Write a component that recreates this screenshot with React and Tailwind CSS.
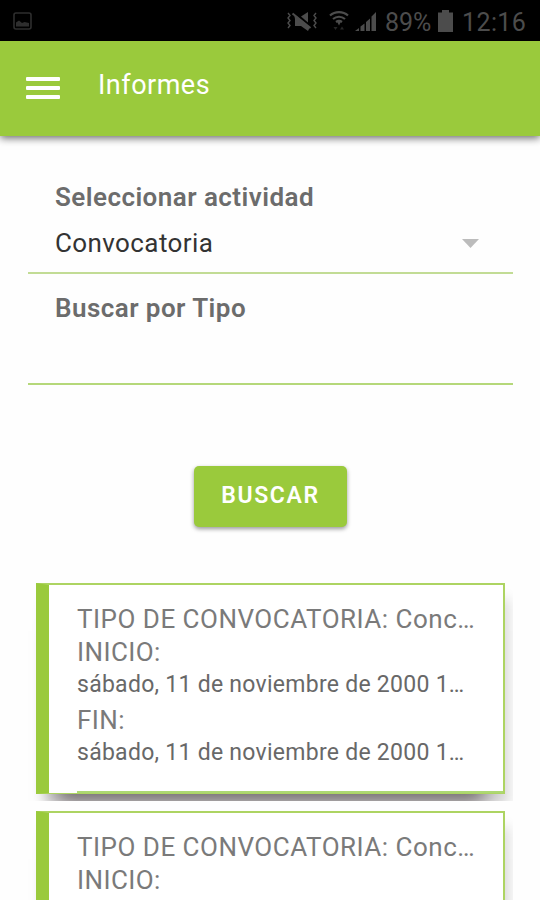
import React, { useState } from 'react';

const RESULTS = [
  {
    id: 1,
    tipo: 'Conc…',
    inicio: 'sábado, 11 de noviembre de 2000 1…',
    fin: 'sábado, 11 de noviembre de 2000 1…',
  },
  {
    id: 2,
    tipo: 'Conc…',
  },
];

const StatusBar = () => (
  <div className="h-[41px] shrink-0 bg-black text-[#4c4c4c] flex items-center">
    <svg className="ml-[13px] w-[19px] h-[18px] text-[#2e2e2e]" viewBox="0 0 19 18">
      <rect x="1" y="1" width="17" height="16" rx="2" fill="none" stroke="currentColor" strokeWidth="1.6" />
      <path d="M3 14.500v-4l3-2 3 2.500 2.500-1 4.500 1v3.500z" fill="currentColor" />
    </svg>

    {/* silenced + vibration */}
    <svg className="ml-[254px] w-[32px] h-[22px]" viewBox="0 0 32 22">
      <path
        d="M2 3l2 2.500-2 2.500 2 2.500-2 2.500 2 2.500-2 2.500M30 3l-2 2.500 2 2.500-2 2.500 2 2.500-2 2.500 2 2.500"
        fill="none"
        stroke="currentColor"
        strokeWidth="1.4"
      />
      <path d="M8 4l16 13-2 4-7-5H9V9z" fill="currentColor" />
      <path d="M15 6.500L22 2v10.500z" fill="currentColor" />
      <path d="M6.500 3.500l18 14.500" stroke="currentColor" strokeWidth="2" />
    </svg>

    <svg className="ml-[11px] w-[20px] h-[22px]" viewBox="0 0 20 22">
      <path
        d="M1 5.500c5-4.500 13-4.500 18 0M4 9c3.500-3 8.500-3 12 0M7 12c2-1.500 4-1.500 6 0"
        fill="none"
        stroke="currentColor"
        strokeWidth="2.2"
      />
      <path d="M8 11.500h4l-2 4z" fill="currentColor" />
      <path d="M4.500 17h4l-2 3zM11 19.500l2-3 2 3z" fill="currentColor" opacity="0.5" />
    </svg>

    <svg className="ml-[6px] w-[22px] h-[22px]" viewBox="0 0 22 22">
      <path d="M0 21l4-3v3zM5.500 16.500l4-3v7.500h-4zM11 12l4-3.500V21h-4zM16.500 6.500L21 2v19h-4.500z" fill="currentColor" />
    </svg>

    <span className="ml-[8px] w-[48px] text-[25px] leading-none whitespace-nowrap pt-[3px]">89%</span>

    <svg className="ml-[5px] w-[15px] h-[22px]" viewBox="0 0 15 22">
      <path d="M4 0h7v2.500h4V22H0V2.500h4z" fill="currentColor" />
    </svg>

    <span className="ml-[9px] text-[25px] leading-none whitespace-nowrap tracking-[0.4px] pt-[3px]">12:16</span>
  </div>
);

const Header = ({ title }) => (
  <header className="relative z-10 h-[95px] shrink-0 bg-[#9aca3c] flex items-start shadow-[0_2px_8px_rgba(0,0,0,0.6)]">
    <button type="button" className="ml-[26px] mt-[36px] w-[34px] flex flex-col gap-[5px]">
      <span className="block w-full h-[4px] bg-white rounded-[1px]" />
      <span className="block w-full h-[4px] bg-white rounded-[1px]" />
      <span className="block w-full h-[4px] bg-white rounded-[1px]" />
    </button>
    <h1 className="ml-[38px] mt-[28px] text-[27px] leading-[32px] tracking-[0.5px] text-white">{title}</h1>
  </header>
);

const ResultCard = ({ item }) => (
  <li className="h-[228px] shrink-0 overflow-hidden pt-[10px] pl-2 pr-2">
    <div className="h-[211px] bg-white border-2 border-b border-l-[13px] border-[#add462] border-l-[#9aca3c] flex flex-col shadow-[0_28px_20px_-20px_#6b6366,6px_14px_12px_-2px_rgba(0,0,0,0.14)]">
      <div className="flex-1 pl-7 pt-[18px] text-[#7a7a7a] whitespace-nowrap">
        <h2 className="text-[26px] leading-[33px] tracking-[0.5px]">TIPO DE CONVOCATORIA: {item.tipo}</h2>
        <h2 className="text-[26px] leading-[33px] tracking-[0.4px]">INICIO:</h2>
        {item.inicio && (
          <p className="text-[23px] leading-[32px] tracking-[0.27px] text-[#686868]">{item.inicio}</p>
        )}
        {item.fin && (
          <>
            <h2 className="mt-[3px] text-[26px] leading-[33px] tracking-[0.4px]">FIN:</h2>
            <p className="text-[23px] leading-[32px] tracking-[0.27px] text-[#686868]">{item.fin}</p>
          </>
        )}
      </div>
      <div className="ml-7 h-[2px] bg-[#add873]" />
    </div>
  </li>
);

const App = () => {
  const [tipo, setTipo] = useState('');

  return (
    <div className="w-[540px] h-[900px] overflow-hidden bg-[#fefefe] flex flex-col font-['Roboto',sans-serif]">
      <StatusBar />
      <Header title="Informes" />

      <main className="flex-1 min-h-0 overflow-hidden flex flex-col pl-7 pr-[27px] pt-[44px]">
        <div className="h-[94px] shrink-0 pl-[27px] border-b-2 border-[#c2dc95]">
          <label className="block text-[26px] leading-[34px] font-semibold tracking-[0.45px] text-[#6c6c6c]">
            Seleccionar actividad
          </label>
          <div className="mt-3 flex items-center justify-between pr-[34px]">
            <span className="text-[26px] leading-[34px] tracking-[0.4px] text-[#333]">Convocatoria</span>
            <svg className="w-[17px] h-[9px]" viewBox="0 0 17 9">
              <path d="M0 0h17L8.500 9z" fill="#bcbcbc" />
            </svg>
          </div>
        </div>

        <div className="h-[111px] shrink-0 pl-[27px] pt-[17px] border-b-2 border-[#b5d87a]">
          <label className="block text-[26px] leading-[34px] font-semibold tracking-[0.45px] text-[#6c6c6c]">
            Buscar por Tipo
          </label>
          <input
            type="text"
            value={tipo}
            onChange={(e) => setTipo(e.target.value)}
            className="mt-2 block w-full h-[40px] bg-transparent outline-none text-[26px]"
          />
        </div>

        <button
          type="button"
          className="mt-[81px] self-center w-[153px] h-[61px] shrink-0 rounded-[5px] bg-[#9aca3c] text-white text-[23px] font-semibold tracking-[1.6px] shadow-[0_2px_4px_rgba(0,0,0,0.4)]"
        >
          BUSCAR
        </button>

        <ul className="mt-[46px] flex flex-col">
          {RESULTS.map((item) => (
            <ResultCard key={item.id} item={item} />
          ))}
        </ul>
      </main>
    </div>
  );
};

export default App;
